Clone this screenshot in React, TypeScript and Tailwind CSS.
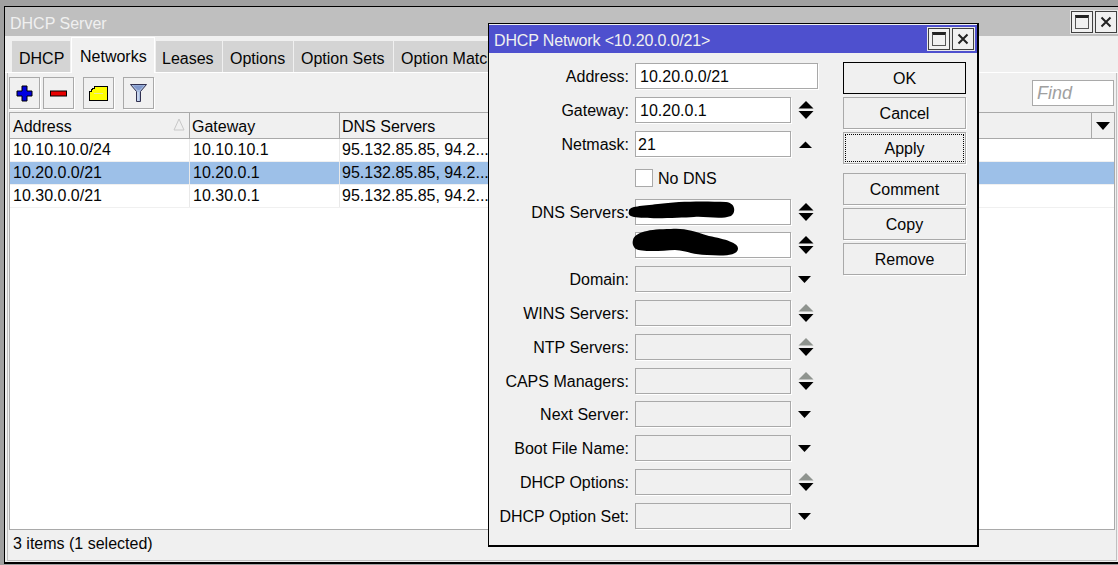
import type { ReactNode } from "react";

const TABS = [
  { label: "DHCP", box: "w-[58px] pl-[7px]" },
  { label: "Networks", box: "w-[84px] pl-[8px]", active: true },
  { label: "Leases", box: "w-[66px] pl-[6px]" },
  { label: "Options", box: "w-[70px] pl-[7px]" },
  { label: "Option Sets", box: "w-[99px] pl-[7px]" },
  { label: "Option Matchers", box: "w-[130px] pl-[7px]" },
];

const NETWORKS = [
  { address: "10.10.10.0/24", gateway: "10.10.10.1" },
  { address: "10.20.0.0/21", gateway: "10.20.0.1", selected: true },
  { address: "10.30.0.0/21", gateway: "10.30.0.1" },
];

type Arrows = "both" | "up" | "down" | "grey";

const FIELDS: { label: string; value: string; arrows: Arrows; pad: string }[] = [
  { label: "Gateway:", value: "10.20.0.1", arrows: "both", pad: "pl-[4px]" },
  { label: "Netmask:", value: "21", arrows: "up", pad: "pl-[2px]" },
];

// tight rows sit 33px under the one above, the others 34px
const LOWER_FIELDS: { label: string; arrows: Arrows; scribble?: 1 | 2; disabled?: boolean; tight?: boolean }[] = [
  { label: "DNS Servers:", arrows: "both", scribble: 1 },
  { label: "", arrows: "both", scribble: 2, tight: true },
  { label: "Domain:", arrows: "down", disabled: true },
  { label: "WINS Servers:", arrows: "grey", disabled: true },
  { label: "NTP Servers:", arrows: "grey", disabled: true },
  { label: "CAPS Managers:", arrows: "grey", disabled: true },
  { label: "Next Server:", arrows: "down", disabled: true, tight: true },
  { label: "Boot File Name:", arrows: "down", disabled: true },
  { label: "DHCP Options:", arrows: "grey", disabled: true },
  { label: "DHCP Option Set:", arrows: "down", disabled: true },
];

function ArrowIcon({ kind }: { kind: Arrows }) {
  return (
    <svg width="16" height="20" viewBox="0 0 16 20" className="block">
      {kind === "both" && <path d="M8 1 L15.5 8.5 H0.5 Z" fill="#000" />}
      {kind === "grey" && <path d="M8 1 L15.5 8.5 H0.5 Z" fill="#8f948f" />}
      {(kind === "both" || kind === "grey") && <path d="M0.5 11 H15.5 L8 19 Z" fill="#000" />}
      {kind === "up" && <path d="M7.5 7.5 L14 14 H1 Z" fill="#000" />}
      {kind === "down" && <path d="M0 7 H13 L6.5 14 Z" fill="#000" />}
    </svg>
  );
}

function WindowButton({ kind }: { kind: "max" | "close" }) {
  return (
    <div className="flex h-[22px] w-[22px] items-center justify-center border border-[#404040] bg-[#f0f0f0] shadow-[0_0_0_1px_#e8e8e8]">
      {kind === "max" ? (
        <div className="h-[14px] w-[14px] border border-[#555] border-t-[3px] border-t-[#222] bg-[#f0f0f0]" />
      ) : (
        <svg width="12" height="12" viewBox="0 0 12 12">
          <path d="M1.5 1.5 L10.5 10.5 M10.5 1.5 L1.5 10.5" stroke="#222" strokeWidth="2" />
        </svg>
      )}
    </div>
  );
}

function ToolButton({ children }: { children: ReactNode }) {
  return (
    <div className="flex h-[32px] w-[31px] items-center justify-center border border-[#a9a9a9] bg-[#f0f0f0] shadow-[1px_1px_0_#fff]">
      {children}
    </div>
  );
}

function Cell({ className, children }: { className: string; children?: ReactNode }) {
  return <div className={`${className} h-full shrink-0 overflow-hidden whitespace-nowrap leading-[22px]`}>{children}</div>;
}

function HeaderCell({ className, children }: { className: string; children?: ReactNode }) {
  return <div className={`${className} relative h-full shrink-0 border-r border-[#a9a9a9] leading-[27px]`}>{children}</div>;
}

function DialogField({
  label,
  value,
  arrows,
  disabled,
  scribble,
  pad = "pl-[4px]",
  className,
}: {
  label: string;
  value?: string;
  arrows: Arrows;
  disabled?: boolean;
  scribble?: 1 | 2;
  pad?: string;
  className?: string;
}) {
  return (
    <div className={`flex h-[26px] items-center ${className ?? ""}`}>
      <div className="h-[26px] w-[134px] shrink-0 whitespace-nowrap text-right leading-[28px]">{label}</div>
      <div className="relative ml-[6px] h-[26px] w-[156px] shrink-0">
        <div
          className={`h-full w-full border border-[#a9a9a9] ${pad} leading-[26px] shadow-[1px_1px_0_#fff] ${
            disabled ? "bg-[#f0f0f0]" : "bg-white"
          }`}
        >
          {value}
        </div>
        {scribble === 1 && (
          <svg width="110" height="22" viewBox="0 0 110 22" className="absolute -left-[7px] top-[2px]">
            <path
              d="M1 10 C1 5 14 5 30 3 C50 0 78 0 98 1 C108 2 108 12 103 15 C92 19 78 15 66 16 C50 17 18 18 6 16 C1 15 0 13 1 10 Z"
              fill="#000"
            />
          </svg>
        )}
        {scribble === 2 && (
          <svg width="112" height="32" viewBox="0 0 112 32" className="absolute -left-[4px] -top-[6px]">
            <path
              d="M2 14 C4 6 18 3 40 3 C54 2 62 5 78 10 C94 13 108 17 107 23 C106 30 92 30 76 29 C62 29 58 25 44 24 C30 25 10 26 5 23 C2 21 1 17 2 14 Z"
              fill="#000"
            />
          </svg>
        )}
      </div>
      <div className="ml-[7px] flex w-[16px] justify-center">
        <ArrowIcon kind={arrows} />
      </div>
    </div>
  );
}

function DialogButton({ label, variant, className }: { label: string; variant?: "default" | "focus"; className?: string }) {
  return (
    <div
      className={`flex h-[32px] w-[123px] items-center justify-center bg-[#f0f0f0] ${
        variant === "default" ? "border border-black" : "border border-[#a9a9a9] shadow-[1px_1px_0_#fff]"
      } ${className ?? ""}`}
    >
      {variant === "focus" ? (
        <div className="flex h-[28px] w-[119px] items-center justify-center border border-dotted border-black">
          <span className="pt-[2px]">{label}</span>
        </div>
      ) : (
        <span className="pt-[2px]">{label}</span>
      )}
    </div>
  );
}

export default function App() {
  return (
    <div
      className="relative h-[565px] w-[1118px] overflow-hidden bg-[#a0a0a0] pl-[4px] pt-[6px] text-[16px] text-[#050505]"
      style={{ fontFamily: '"Liberation Sans", Arial, sans-serif' }}
    >
      <div className="flex h-[558px] w-[1114px] flex-col border-b-2 border-l border-t border-black bg-[#f0f0f0]">
        {/* title bar */}
        <div className="flex h-[29px] shrink-0 items-center justify-between bg-[#bfbfbf] pl-[5px] pr-[1px] text-[#f0f0f0]">
          <span className="pt-[4px]">DHCP Server</span>
          <div className="flex gap-[2px]">
            <WindowButton kind="max" />
            <WindowButton kind="close" />
          </div>
        </div>

        {/* tabs */}
        <div className="flex h-[37px] shrink-0 items-end gap-[1px] border-b border-white pl-[7px]">
          {TABS.map((t) => (
            <div
              key={t.label}
              className={
                t.active
                  ? `${t.box} -mb-[1px] h-[36px] shrink-0 overflow-hidden whitespace-nowrap border-l border-r border-t border-white bg-[#f0f0f0] pt-[7px]`
                  : `${t.box} h-[31px] shrink-0 overflow-hidden whitespace-nowrap bg-[#d4d4d4] pt-[6px]`
              }
            >
              {t.label}
            </div>
          ))}
        </div>

        {/* tab pane */}
        <div className="mb-[1px] ml-[2px] mr-[1px] flex min-h-0 flex-1 flex-col border-b border-l border-r border-[#c0c0c0]">
          <div className="flex h-[38px] shrink-0 items-center pl-[1px] pr-[1px] pt-[2px]">
            <div className="flex w-full items-center">
              <div className="flex gap-[3px]">
                <ToolButton>
                  <svg width="17" height="17" viewBox="0 0 17 17">
                    <path d="M6 1 H11 V6 H16 V11 H11 V16 H6 V11 H1 V6 H6 Z" fill="#0000e0" stroke="#000" strokeWidth="1" />
                  </svg>
                </ToolButton>
                <ToolButton>
                  <svg width="17" height="7" viewBox="0 0 17 7">
                    <rect x="0.5" y="1" width="16" height="5" fill="#e80000" stroke="#000" strokeWidth="1" />
                  </svg>
                </ToolButton>
              </div>
              <div className="ml-[9px]">
                <ToolButton>
                  <svg width="19" height="15" viewBox="0 0 19 15" shapeRendering="crispEdges">
                    <path d="M5 0.5 H18.5 V14.5 H0.5 V5 H2 V3.5 H3.5 V2 H5 Z" fill="#ffff00" stroke="#000" strokeWidth="1" />
                    <path d="M5 7.5 H14" stroke="#e8e8a0" strokeWidth="1" />
                  </svg>
                </ToolButton>
              </div>
              <div className="ml-[9px]">
                <ToolButton>
                  <svg width="17" height="18" viewBox="0 0 17 18">
                    <path d="M0.5 0.5 H16.5 L10.5 7.5 V17.5 H6.5 V7.5 Z" fill="#a9bde0" stroke="#303050" strokeWidth="1" />
                    <path d="M3 1.5 H14 L9.5 6 H7.5 Z" fill="#8098cc" />
                    <path d="M8 8 V17" stroke="#e4ecf8" strokeWidth="1" />
                  </svg>
                </ToolButton>
              </div>
              <div className="ml-auto mr-[1px] h-[26px] w-[82px] border border-[#a9a9a9] bg-white pl-[4px] text-[18px] italic leading-[25px] text-[#a0a0a0]">
                Find
              </div>
            </div>
          </div>

          {/* table */}
          <div className="ml-[1px] mr-[1px] mt-[1px] flex min-h-0 flex-1 flex-col border border-[#a9a9a9] bg-white">
            <div className="flex h-[26px] shrink-0 border-b border-[#a9a9a9] bg-[#f0f0f0]">
              <HeaderCell className="w-[180px] pl-[3px]">
                Address
                <svg width="12" height="13" viewBox="0 0 12 13" className="absolute right-[4px] top-[5px]">
                  <path d="M6 1 L11 12 H1 Z" fill="none" stroke="#c8c8c8" />
                </svg>
              </HeaderCell>
              <HeaderCell className="w-[150px] pl-[2px]">Gateway</HeaderCell>
              <HeaderCell className="w-[752px] pl-[2px]">DNS Servers</HeaderCell>
              <div className="flex flex-1 items-center justify-center">
                <svg width="14" height="8" viewBox="0 0 14 8">
                  <path d="M0 0 H14 L7 8 Z" fill="#000" />
                </svg>
              </div>
            </div>
            {NETWORKS.map((n) => (
              <div
                key={n.address}
                className={`flex h-[23px] shrink-0 border-b border-[#f0f0f0] ${n.selected ? "bg-[#9dc0e8]" : "bg-white"}`}
              >
                <Cell className="w-[180px] border-r border-[#e9e9e9] pl-[3px]">{n.address}</Cell>
                <Cell className="w-[150px] border-r border-[#e9e9e9] pl-[3px]">{n.gateway}</Cell>
                <Cell className="w-[752px] pl-[2px]">95.132.85.85, 94.2...</Cell>
              </div>
            ))}
          </div>

          {/* status bar */}
          <div className="flex h-[30px] shrink-0 items-center pb-[3px] pl-[5px]">3 items (1 selected)</div>
        </div>
      </div>

      {/* dialog window */}
      <div className="absolute left-[488px] top-[23px] flex h-[524px] w-[491px] flex-col border border-b-2 border-r-2 border-black bg-[#f0f0f0]">
        <div className="mt-[1px] flex h-[28px] shrink-0 items-center justify-between bg-[#4e50ce] pl-[5px] pr-[3px] text-[#f0f0f0]">
          <span className="pt-[4px] tracking-[-0.15px]">DHCP Network &lt;10.20.0.0/21&gt;</span>
          <div className="flex gap-[2px]">
            <WindowButton kind="max" />
            <WindowButton kind="close" />
          </div>
        </div>
        <div className="flex min-h-0 flex-1 pl-[6px] pt-[10px]">
          <div className="flex w-[348px] shrink-0 flex-col">
            <div className="flex h-[26px] items-center">
              <div className="h-[26px] w-[134px] shrink-0 text-right leading-[28px]">Address:</div>
              <div className="ml-[6px] h-[26px] w-[183px] border border-[#a9a9a9] bg-white pl-[4px] leading-[26px] shadow-[1px_1px_0_#fff]">
                10.20.0.0/21
              </div>
            </div>
            <div className="mt-[8px] flex flex-col gap-[8px]">
              {FIELDS.map((f) => (
                <DialogField key={f.label} label={f.label} value={f.value} arrows={f.arrows} pad={f.pad} />
              ))}
            </div>
            <div className="mt-[8px] flex h-[26px] items-center pl-[140px]">
              <div className="h-[18px] w-[18px] border border-[#a9a9a9] bg-white" />
              <span className="ml-[5px] h-[26px] leading-[28px]">No DNS</span>
            </div>
            <div className="mt-[8px] flex flex-col gap-[8px]">
              {LOWER_FIELDS.map((f, i) => (
                <DialogField
                  key={i}
                  label={f.label}
                  arrows={f.arrows}
                  disabled={f.disabled}
                  scribble={f.scribble}
                  className={f.tight ? "-mt-[1px]" : ""}
                />
              ))}
            </div>
          </div>
          <div className="flex flex-col">
            <DialogButton label="OK" variant="default" className="-mt-[1px]" />
            <DialogButton label="Cancel" className="mt-[3px]" />
            <DialogButton label="Apply" variant="focus" className="mt-[3px]" />
            <DialogButton label="Comment" className="mt-[9px]" />
            <DialogButton label="Copy" className="mt-[3px]" />
            <DialogButton label="Remove" className="mt-[3px]" />
          </div>
        </div>
      </div>
    </div>
  );
}
